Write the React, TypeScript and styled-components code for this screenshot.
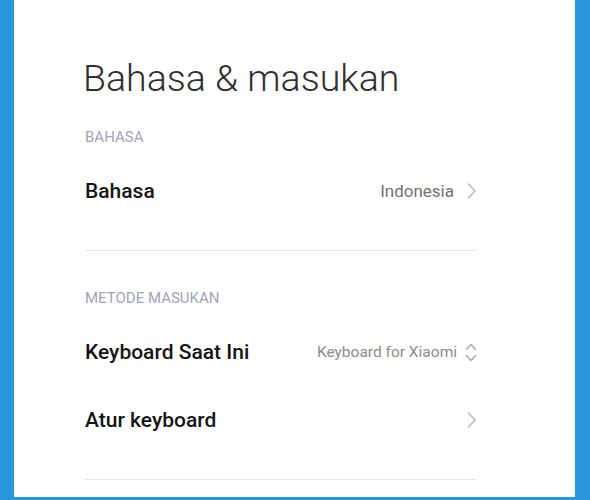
import styled, { createGlobalStyle } from 'styled-components'

const GlobalStyle = createGlobalStyle`
  html, body {
    margin: 0;
    padding: 0;
    background: #2996da;
  }
  body {
    font-family: Roboto, 'Noto Sans', sans-serif;
    -webkit-font-smoothing: antialiased;
  }
`

const Screen = styled.div`
  width: 590px;
  height: 500px;
  overflow: hidden;
`

const Panel = styled.main`
  box-sizing: border-box;
  margin-left: 14px;
  width: 561px;
  height: 497px;
  background: #ffffff;
  padding: 55px 98px 0 71px;
`

const Title = styled.h1`
  margin: 0 0 26px -2px;
  font-size: 37.5px;
  line-height: 46px;
  font-weight: 300;
  color: #2f2f2f;
`

const Section = styled.section`
  display: flex;
  flex-direction: column;
  & + & {
    margin-top: 37px;
  }
`

const SectionLabel = styled.div`
  font-size: 15px;
  line-height: 20px;
  color: #a1a4b8;
  margin-bottom: 10px;
`

const Row = styled.div`
  display: flex;
  align-items: center;
  justify-content: space-between;
  height: 68px;
`

const RowLabel = styled.span`
  font-size: 21px;
  font-weight: 500;
  color: #141414;
`

const RowValue = styled.div`
  display: flex;
  align-items: center;
`

const ValueText = styled.span<{ $small?: boolean }>`
  font-size: ${(p) => (p.$small ? '15.5px' : '17px')};
  color: ${(p) => (p.$small ? '#8c8c8c' : '#737373')};
  margin-right: ${(p) => (p.$small ? '8px' : '12px')};
`

const Divider = styled.hr`
  margin: 25px 0 0;
  border: 0;
  height: 1px;
  background: #e6e6e6;
`

const Chevron = () => (
  <svg width="11" height="16" viewBox="0 0 11 16" fill="none">
    <path d="M2.5 1 L9 8 L2.5 15" stroke="#b8b8b8" strokeWidth="1.4" strokeLinecap="round" strokeLinejoin="round" />
  </svg>
)

const UpDown = () => (
  <svg width="12" height="19" viewBox="0 0 12 19" fill="none">
    <path d="M1.5 6.5 L6 1.5 L10.5 6.5" stroke="#a8a8a8" strokeWidth="1.5" strokeLinecap="round" strokeLinejoin="round" />
    <path d="M1.5 12.5 L6 17.5 L10.5 12.5" stroke="#a8a8a8" strokeWidth="1.5" strokeLinecap="round" strokeLinejoin="round" />
  </svg>
)

export default function App() {
  return (
    <Screen>
      <GlobalStyle />
      <Panel>
        <Title>Bahasa &amp; masukan</Title>
        <Section>
          <SectionLabel>BAHASA</SectionLabel>
          <Row>
            <RowLabel>Bahasa</RowLabel>
            <RowValue>
              <ValueText>Indonesia</ValueText>
              <Chevron />
            </RowValue>
          </Row>
          <Divider />
        </Section>
        <Section>
          <SectionLabel>METODE MASUKAN</SectionLabel>
          <Row>
            <RowLabel>Keyboard Saat Ini</RowLabel>
            <RowValue>
              <ValueText $small>Keyboard for Xiaomi</ValueText>
              <UpDown />
            </RowValue>
          </Row>
          <Row>
            <RowLabel>Atur keyboard</RowLabel>
            <RowValue>
              <Chevron />
            </RowValue>
          </Row>
          <Divider />
        </Section>
      </Panel>
    </Screen>
  )
}
